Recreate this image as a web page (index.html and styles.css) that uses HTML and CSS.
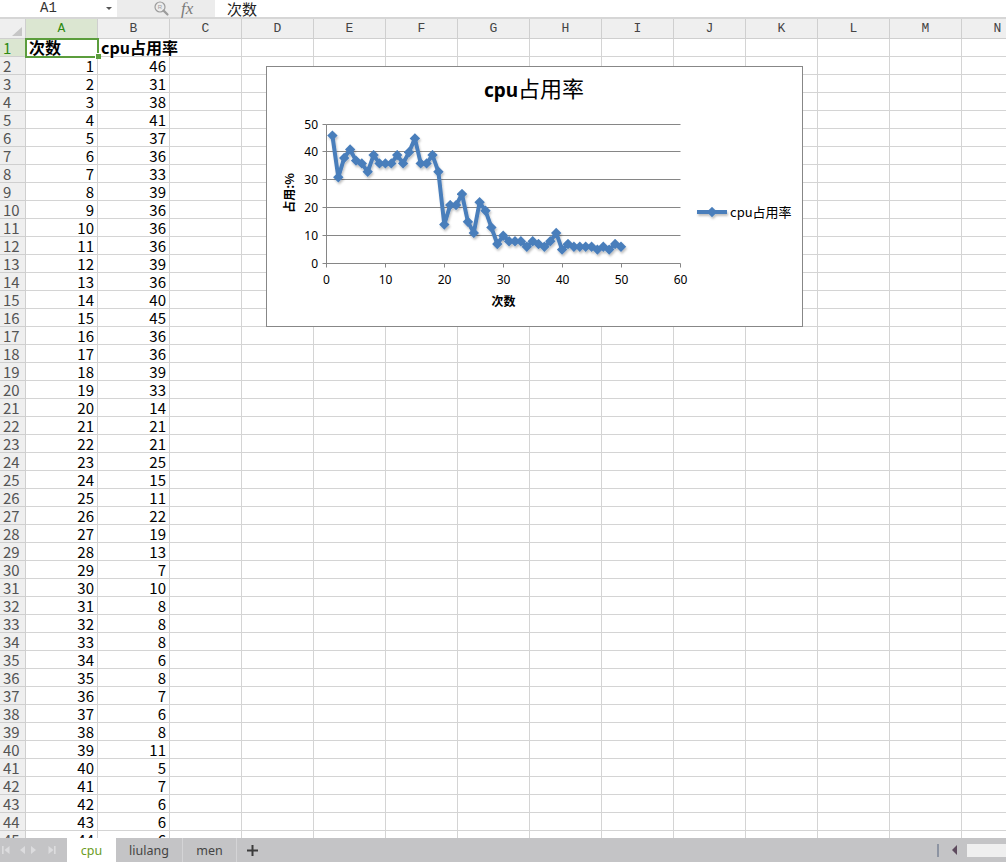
FILE: index.html
```html
<!DOCTYPE html>
<html lang="zh-CN">
<head>
<meta charset="utf-8">
<title>cpu</title>
<link rel="stylesheet" href="styles.css">
</head>
<body>
<div class="app">
  <div class="fbar">
    <div class="namebox"><span class="ref">A1</span><span class="dd"></span></div>
    <div class="fbtns">
      <svg class="mag" width="18" height="16" viewBox="0 0 18 16">
        <circle cx="7" cy="6" r="5" fill="none" stroke="#9c9c9c" stroke-width="1.2"/>
        <text x="7" y="8.2" text-anchor="middle" class="magr">R</text>
        <path d="M10.6 9.6 L14.5 13.5" stroke="#9c9c9c" stroke-width="2.2" stroke-linecap="round"/>
      </svg>
      <span class="fx">fx</span>
    </div>
    <div class="finput">次数</div>
  </div>

  <div class="sheet">
    <div class="colhead">
      <div class="corner"><span class="tri"></span></div>
      <div class="ch sel">A</div><div class="ch">B</div><div class="ch">C</div><div class="ch">D</div><div class="ch">E</div><div class="ch">F</div><div class="ch">G</div><div class="ch">H</div><div class="ch">I</div><div class="ch">J</div><div class="ch">K</div><div class="ch">L</div><div class="ch">M</div><div class="ch">N</div>
    </div>
    <div class="row"><div class="rh sel">1</div><div class="c t">次数</div><div class="c t ovf">cpu占用率</div><div class="rest"></div></div>
    <div class="row"><div class="rh">2</div><div class="c">1</div><div class="c">46</div><div class="rest"></div></div>
    <div class="row"><div class="rh">3</div><div class="c">2</div><div class="c">31</div><div class="rest"></div></div>
    <div class="row"><div class="rh">4</div><div class="c">3</div><div class="c">38</div><div class="rest"></div></div>
    <div class="row"><div class="rh">5</div><div class="c">4</div><div class="c">41</div><div class="rest"></div></div>
    <div class="row"><div class="rh">6</div><div class="c">5</div><div class="c">37</div><div class="rest"></div></div>
    <div class="row"><div class="rh">7</div><div class="c">6</div><div class="c">36</div><div class="rest"></div></div>
    <div class="row"><div class="rh">8</div><div class="c">7</div><div class="c">33</div><div class="rest"></div></div>
    <div class="row"><div class="rh">9</div><div class="c">8</div><div class="c">39</div><div class="rest"></div></div>
    <div class="row"><div class="rh">10</div><div class="c">9</div><div class="c">36</div><div class="rest"></div></div>
    <div class="row"><div class="rh">11</div><div class="c">10</div><div class="c">36</div><div class="rest"></div></div>
    <div class="row"><div class="rh">12</div><div class="c">11</div><div class="c">36</div><div class="rest"></div></div>
    <div class="row"><div class="rh">13</div><div class="c">12</div><div class="c">39</div><div class="rest"></div></div>
    <div class="row"><div class="rh">14</div><div class="c">13</div><div class="c">36</div><div class="rest"></div></div>
    <div class="row"><div class="rh">15</div><div class="c">14</div><div class="c">40</div><div class="rest"></div></div>
    <div class="row"><div class="rh">16</div><div class="c">15</div><div class="c">45</div><div class="rest"></div></div>
    <div class="row"><div class="rh">17</div><div class="c">16</div><div class="c">36</div><div class="rest"></div></div>
    <div class="row"><div class="rh">18</div><div class="c">17</div><div class="c">36</div><div class="rest"></div></div>
    <div class="row"><div class="rh">19</div><div class="c">18</div><div class="c">39</div><div class="rest"></div></div>
    <div class="row"><div class="rh">20</div><div class="c">19</div><div class="c">33</div><div class="rest"></div></div>
    <div class="row"><div class="rh">21</div><div class="c">20</div><div class="c">14</div><div class="rest"></div></div>
    <div class="row"><div class="rh">22</div><div class="c">21</div><div class="c">21</div><div class="rest"></div></div>
    <div class="row"><div class="rh">23</div><div class="c">22</div><div class="c">21</div><div class="rest"></div></div>
    <div class="row"><div class="rh">24</div><div class="c">23</div><div class="c">25</div><div class="rest"></div></div>
    <div class="row"><div class="rh">25</div><div class="c">24</div><div class="c">15</div><div class="rest"></div></div>
    <div class="row"><div class="rh">26</div><div class="c">25</div><div class="c">11</div><div class="rest"></div></div>
    <div class="row"><div class="rh">27</div><div class="c">26</div><div class="c">22</div><div class="rest"></div></div>
    <div class="row"><div class="rh">28</div><div class="c">27</div><div class="c">19</div><div class="rest"></div></div>
    <div class="row"><div class="rh">29</div><div class="c">28</div><div class="c">13</div><div class="rest"></div></div>
    <div class="row"><div class="rh">30</div><div class="c">29</div><div class="c">7</div><div class="rest"></div></div>
    <div class="row"><div class="rh">31</div><div class="c">30</div><div class="c">10</div><div class="rest"></div></div>
    <div class="row"><div class="rh">32</div><div class="c">31</div><div class="c">8</div><div class="rest"></div></div>
    <div class="row"><div class="rh">33</div><div class="c">32</div><div class="c">8</div><div class="rest"></div></div>
    <div class="row"><div class="rh">34</div><div class="c">33</div><div class="c">8</div><div class="rest"></div></div>
    <div class="row"><div class="rh">35</div><div class="c">34</div><div class="c">6</div><div class="rest"></div></div>
    <div class="row"><div class="rh">36</div><div class="c">35</div><div class="c">8</div><div class="rest"></div></div>
    <div class="row"><div class="rh">37</div><div class="c">36</div><div class="c">7</div><div class="rest"></div></div>
    <div class="row"><div class="rh">38</div><div class="c">37</div><div class="c">6</div><div class="rest"></div></div>
    <div class="row"><div class="rh">39</div><div class="c">38</div><div class="c">8</div><div class="rest"></div></div>
    <div class="row"><div class="rh">40</div><div class="c">39</div><div class="c">11</div><div class="rest"></div></div>
    <div class="row"><div class="rh">41</div><div class="c">40</div><div class="c">5</div><div class="rest"></div></div>
    <div class="row"><div class="rh">42</div><div class="c">41</div><div class="c">7</div><div class="rest"></div></div>
    <div class="row"><div class="rh">43</div><div class="c">42</div><div class="c">6</div><div class="rest"></div></div>
    <div class="row"><div class="rh">44</div><div class="c">43</div><div class="c">6</div><div class="rest"></div></div>
    <div class="row"><div class="rh">45</div><div class="c">44</div><div class="c">6</div><div class="rest"></div></div>

    <div class="selbox"></div>
    <div class="handle"></div>

    <div class="chartbox">
      <svg width="537" height="261" viewBox="0 0 537 261">
        <defs>
          <marker id="dm" markerUnits="userSpaceOnUse" markerWidth="11" markerHeight="11" refX="5.5" refY="5.5" viewBox="0 0 11 11">
            <path d="M5.5 0.3 L10.7 5.5 L5.5 10.7 L0.3 5.5 Z" fill="#4a7ebb"/>
          </marker>
          <filter id="sh" x="-5%" y="-10%" width="115%" height="130%">
            <feDropShadow dx="1" dy="2" stdDeviation="1" flood-color="#000" flood-opacity="0.25"/>
          </filter>
        </defs>
        <rect x="0.5" y="0.5" width="536" height="260" fill="#fff" stroke="#878787"/>
        <text x="268" y="31" text-anchor="middle" class="ttl"><tspan class="ttl-l">cpu</tspan><tspan class="ttl-c">占用率</tspan></text>

        <path d="M60.5 58.5H414.5M60.5 85.5H414.5M60.5 113.5H414.5M60.5 141.5H414.5M60.5 169.5H414.5" stroke="#868686" fill="none"/>
        <path d="M60.5 58.5V197.5M56.5 58.5H60.5M56.5 85.5H60.5M56.5 113.5H60.5M56.5 141.5H60.5M56.5 169.5H60.5M56.5 197.5H414.5M60.5 197.5V201.5M119.5 197.5V201.5M178.5 197.5V201.5M237.5 197.5V201.5M296.5 197.5V201.5M355.5 197.5V201.5M414.5 197.5V201.5" stroke="#868686" fill="none"/>

        <g class="tick" text-anchor="end">
          <text x="52" y="63">50</text>
          <text x="52" y="90">40</text>
          <text x="52" y="118">30</text>
          <text x="52" y="146">20</text>
          <text x="52" y="174">10</text>
          <text x="52" y="202">0</text>
        </g>
        <g class="tick" text-anchor="middle">
          <text x="60.5" y="218">0</text>
          <text x="119.5" y="218">10</text>
          <text x="178.5" y="218">20</text>
          <text x="237.5" y="218">30</text>
          <text x="296.5" y="218">40</text>
          <text x="355.5" y="218">50</text>
          <text x="414.5" y="218">60</text>
        </g>
        <text x="237.5" y="240" text-anchor="middle" class="axt">次数</text>
        <text x="0" y="0" text-anchor="middle" class="axt" transform="translate(28 127) rotate(-90)">占用:%</text>

        <g filter="url(#sh)">
          <polyline fill="none" stroke="#4a7ebb" stroke-width="4" stroke-linejoin="round" marker-start="url(#dm)" marker-mid="url(#dm)" marker-end="url(#dm)"
            points="66.4,69.6 72.3,111.3 78.2,91.9 84.1,83.5 90,94.6 95.8,97.4 101.7,105.8 107.6,89.1 113.5,97.4 119.4,97.4 125.3,97.4 131.2,89.1 137.1,97.4 143,86.3 148.9,72.4 154.7,97.4 160.6,97.4 166.5,89.1 172.4,105.8 178.3,158.6 184.2,139.1 190.1,139.1 196,128 201.9,155.8 207.8,166.9 213.6,136.3 219.5,144.7 225.4,161.4 231.3,178 237.2,169.7 243.1,175.3 249,175.3 254.9,175.3 260.8,180.8 266.7,175.3 272.5,178 278.4,180.8 284.3,175.3 290.2,166.9 296.1,183.6 302,178 307.9,180.8 313.8,180.8 319.7,180.8 325.6,180.8 331.4,183.6 337.3,180.8 343.2,183.6 349.1,178 355,180.8"/>
          <path d="M431 146H446H461" stroke="#4a7ebb" stroke-width="4" fill="none" marker-mid="url(#dm)"/>
        </g>
        <text x="464" y="151" class="leg">cpu占用率</text>
      </svg>
    </div>
  </div>

  <div class="tabs">
    <svg class="nav" width="67" height="24" viewBox="0 0 67 24">
      <g fill="#dcdcde">
        <rect x="2" y="8" width="1.6" height="8"/>
        <path d="M9.5 8 L4.5 12 L9.5 16 Z"/>
        <path d="M25 8 L20 12 L25 16 Z"/>
        <path d="M31 8 L36 12 L31 16 Z"/>
        <path d="M48.5 8 L53.5 12 L48.5 16 Z"/>
        <rect x="54" y="8" width="1.6" height="8"/>
      </g>
    </svg>
    <div class="tab active">cpu</div>
    <div class="tab wide">liulang</div>
    <div class="tab mid">men</div>
    <svg class="plus" width="30" height="24" viewBox="0 0 30 24">
      <path d="M10 12.5H21M15.5 7V18" stroke="#3c3c3c" stroke-width="2"/>
    </svg>
    <div class="rctl">
      <span class="vbar"></span>
      <svg class="larr" width="7" height="12" viewBox="0 0 7 12"><path d="M6 1 L1 6 L6 11 Z" fill="#5e4b5e"/></svg>
      <span class="thumb"></span>
    </div>
  </div>
</div>
</body>
</html>
```

FILE: styles.css
```css
* {
  box-sizing: border-box;
  margin: 0;
  padding: 0;
}

html,
body {
  width: 1006px;
  height: 862px;
  overflow: hidden;
  background: #fff;
}

body {
  font-family: "Noto Sans CJK SC", "Noto Sans", sans-serif;
  color: #000;
}

.app {
  display: flex;
  flex-direction: column;
  height: 862px;
}

/* ---------- formula bar ---------- */
.fbar {
  display: flex;
  flex: 0 0 19px;
  border-bottom: 2px solid #d6d6d6;
}

.namebox {
  width: 117px;
  display: flex;
  align-items: center;
  background: #fff;
}

.ref {
  font-family: "Liberation Mono", monospace;
  font-size: 14px;
  line-height: 17px;
  color: #333;
  margin-left: 40px;
}

.dd {
  margin-left: auto;
  margin-right: 5px;
  width: 0;
  height: 0;
  border-left: 3px solid transparent;
  border-right: 3px solid transparent;
  border-top: 3px solid #555;
}

.fbtns {
  width: 98px;
  background: #ececec;
  display: flex;
  align-items: center;
  padding-left: 36px;
}

.mag {
  display: block;
}

.magr {
  font-family: "Liberation Sans", sans-serif;
  font-size: 6px;
  fill: #9c9c9c;
}

.fx {
  margin-left: 10px;
  font-family: "Liberation Serif", serif;
  font-style: italic;
  font-size: 17px;
  line-height: 17px;
  color: #7a7a7a;
}

.finput {
  flex: 1;
  padding-left: 12px;
  font-size: 15px;
  line-height: 17px;
  color: #222;
}

/* ---------- sheet ---------- */
.sheet {
  flex: 1;
  position: relative;
  overflow: hidden;
}

.colhead {
  display: flex;
  height: 20px;
}

.corner {
  flex: 0 0 26px;
  height: 20px;
  background: #efefef;
  border-right: 1px solid #cfcfcf;
  border-bottom: 1px solid #cfcfcf;
  display: flex;
  align-items: flex-end;
  justify-content: flex-end;
  padding: 0 3px 2px 0;
}

.tri {
  width: 0;
  height: 0;
  border-left: 10px solid transparent;
  border-bottom: 9px solid #c6c6c6;
}

.ch {
  flex: 0 0 72px;
  min-width: 0;
  height: 20px;
  background: #efefef;
  border-right: 1px solid #cfcfcf;
  border-bottom: 1px solid #cfcfcf;
  text-align: center;
  font-family: "Liberation Mono", monospace;
  font-size: 13px;
  line-height: 19px;
  color: #444;
}

.ch.sel {
  background: #dbe6d1;
  color: #2f8a12;
}

.row {
  display: flex;
  height: 18px;
}

.rh {
  flex: 0 0 26px;
  min-width: 0;
  background: #efefef;
  border-right: 1px solid #cfcfcf;
  border-bottom: 1px solid #cfcfcf;
  padding-left: 3px;
  font-size: 15px;
  line-height: 17px;
  color: #555;
}

.rh.sel {
  background: #dbe6d1;
  color: #2f8a12;
}

.c {
  flex: 0 0 72px;
  min-width: 0;
  border-right: 1px solid #d4d4d4;
  border-bottom: 1px solid #d4d4d4;
  padding-right: 3px;
  text-align: right;
  font-size: 15px;
  line-height: 17px;
  white-space: nowrap;
}

.c.t {
  text-align: left;
  padding-left: 3px;
  padding-right: 0;
  font-weight: bold;
  font-size: 16px;
}

.c.ovf {
  border-right-color: #fff;
  overflow: visible;
}

.rest {
  flex: 1 1 auto;
  min-width: 0;
  border-bottom: 1px solid #d4d4d4;
  background-image: repeating-linear-gradient(to right, transparent 0 71px, #d4d4d4 71px 72px);
}

/* selection overlay */
.selbox {
  position: absolute;
  left: 25px;
  top: 19px;
  width: 74px;
  height: 20px;
  border: 2px solid #5b9d3c;
}

.handle {
  position: absolute;
  left: 95px;
  top: 34px;
  width: 6px;
  height: 6px;
  background: #5b9d3c;
  border-left: 1px solid #fff;
  border-top: 1px solid #fff;
}

/* chart overlay */
.chartbox {
  position: absolute;
  left: 266px;
  top: 47px;
  width: 537px;
  height: 261px;
}

.chartbox svg {
  display: block;
}

.ttl {
  fill: #000;
}

.ttl-l {
  font-family: "Noto Sans", sans-serif;
  font-weight: bold;
  font-size: 19px;
}

.ttl-c {
  font-family: "Noto Sans CJK SC", sans-serif;
  font-size: 22px;
}

.tick text {
  font-family: "Noto Sans", sans-serif;
  font-size: 12px;
  fill: #000;
}

.axt {
  font-family: "Noto Sans CJK SC", sans-serif;
  font-weight: bold;
  font-size: 12px;
  fill: #000;
}

.leg {
  font-family: "Noto Sans CJK SC", sans-serif;
  font-size: 13px;
  fill: #000;
}

/* ---------- sheet tabs ---------- */
.tabs {
  flex: 0 0 24px;
  display: flex;
  align-items: stretch;
  background: #c4c4c6;
  position: relative;
  z-index: 1;
}

.nav {
  display: block;
  flex: 0 0 67px;
}

.tab {
  display: flex;
  align-items: center;
  justify-content: center;
  font-family: "Noto Sans", sans-serif;
  font-size: 12.5px;
  color: #444;
}

.tab.active {
  flex: 0 0 49px;
  background: #fff;
  color: #6b9b1e;
}

.tab.wide {
  flex: 0 0 67px;
  border-right: 1px solid #d4d4d6;
}

.tab.mid {
  flex: 0 0 54px;
  border-right: 1px solid #d4d4d6;
}

.plus {
  display: block;
  flex: 0 0 30px;
}

.rctl {
  margin-left: auto;
  display: flex;
  align-items: center;
}

.vbar {
  width: 2px;
  height: 13px;
  background: #8d94a2;
  margin-right: 12px;
}

.larr {
  display: block;
  margin-right: 9px;
}

.thumb {
  width: 39px;
  height: 13px;
  background: #efefef;
}
```
